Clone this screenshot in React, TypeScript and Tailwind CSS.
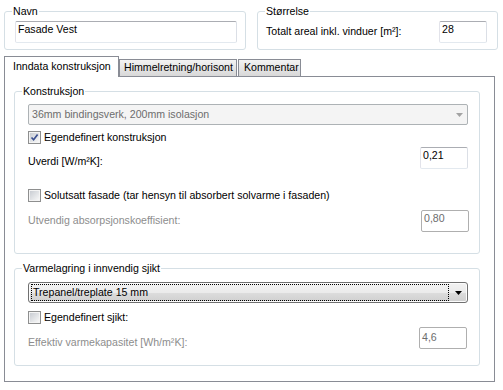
import type { ReactNode } from 'react';

function GroupBox({ title, className = '', children }: { title: string; className?: string; children: ReactNode }) {
  return (
    <fieldset className={`border border-[#d5dfe5] rounded-[3px] px-0 ${className}`}>
      <legend className="ml-[7px] px-[1px] leading-[12px]">{title}</legend>
      {children}
    </fieldset>
  );
}

function TextBox({ value, disabled = false, className = '' }: { value: string; disabled?: boolean; className?: string }) {
  const edge = disabled
    ? 'border-[#afafaf] text-[#6d6d6d]'
    : 'border-[#e3e9ef] border-t-[#abadb3] border-l-[#e2e3ea] border-r-[#dbdfe6] text-black';
  return (
    <div className={`h-[22px] shrink-0 border bg-white rounded-[2px] pl-[2px] pt-[1px] ${edge} ${className}`}>{value}</div>
  );
}

function CheckBox({ checked = false, label, className = '' }: { checked?: boolean; label: string; className?: string }) {
  return (
    <div className={`flex items-center ${className}`}>
      <span className="w-[13px] h-[13px] shrink-0 border border-[#8e8f8f] bg-[#f4f4f4] p-[1px]">
        <span className="block w-full h-full bg-linear-to-br from-[#c9cdd3] to-[#f7f7f7]">
          {checked && (
            <svg width="9" height="9" viewBox="0 0 9 9" className="block">
              <path d="M1.5 4.5 L3.6 6.8 L7.6 1.6" fill="none" stroke="#3a4f8f" strokeWidth="1.7" />
            </svg>
          )}
        </span>
      </span>
      <span className="ml-[3px]">{label}</span>
    </div>
  );
}

function DisabledCombo({ value }: { value: string }) {
  return (
    <div className="h-[21px] flex items-center justify-between border border-[#adb2b5] rounded-[2px] bg-[#f4f4f4] text-[#6d6d6d] pl-[3px] pr-[4px]">
      <span>{value}</span>
      <svg width="7" height="4" viewBox="0 0 7 4">
        <path d="M0 0 H7 L3.5 4 Z" fill="#a3a3a3" />
      </svg>
    </div>
  );
}

function FocusedCombo({ value }: { value: string }) {
  return (
    <div className="h-[21px] flex items-center border border-[#707070] rounded-[3px] bg-[linear-gradient(#f2f2f2_0%,#ebebeb_50%,#dddddd_50%,#cfcfcf_100%)] shadow-[inset_0_0_0_1px_#fcfcfc]">
      <div className="ml-[2px] w-[418px] h-[17px] border border-dotted border-black pl-[1px] pt-[1px]">{value}</div>
      <div className="flex-1 flex justify-center">
        <svg width="7" height="4" viewBox="0 0 7 4">
          <path d="M0 0 H7 L3.5 4 Z" fill="#000" />
        </svg>
      </div>
    </div>
  );
}

export default function App() {
  return (
    <div className="w-[503px] h-[390px] bg-white text-[10.6px] leading-[13px] text-black font-['Liberation_Sans',Arial,sans-serif] overflow-hidden">
      {/* Top row: Navn + Størrelse */}
      <div className="flex pt-[5px]">
        <GroupBox title="Navn" className="ml-[4px] w-[242px]">
          <div className="pt-[4px] pb-[6px] pl-[10px]">
            <TextBox value="Fasade Vest" className="w-[222px]" />
          </div>
        </GroupBox>
        <GroupBox title="Størrelse" className="ml-[11px] w-[241px]">
          <div className="flex items-start justify-between pt-[4px] pb-[6px] pl-[8px] pr-[10px]">
            <span className="mt-[4px]">Totalt areal inkl. vinduer [m²]:</span>
            <TextBox value="28" className="w-[48px]" />
          </div>
        </GroupBox>
      </div>

      {/* Tabs */}
      <div className="flex items-end h-[20px] mt-[6px] pl-[4px] relative z-10">
        <div className="h-[21px] -mb-px w-[115px] border border-b-0 border-[#898c95] bg-white pl-[8px] pt-[3px]">
          Inndata konstruksjon
        </div>
        <div className="h-[17px] w-[118px] border border-b-0 border-[#898c95] bg-linear-to-b from-[#f3f3f3] to-[#d8d8d8] pl-[4px] pt-[1px]">
          Himmelretning/horisont
        </div>
        <div className="h-[17px] w-[63px] ml-px border border-b-0 border-[#898c95] bg-linear-to-b from-[#f3f3f3] to-[#d8d8d8] pl-[5px] pt-[1px]">
          Kommentar
        </div>
      </div>

      {/* Tab page */}
      <div className="ml-[4px] w-[491px] h-[306px] border border-[#898c95] bg-white pt-[8px]">
        <GroupBox title="Konstruksjon" className="ml-[9px] w-[466px]">
          <div className="flex flex-col pt-[7px] pb-[21px] pl-[13px] pr-[11px]">
            <DisabledCombo value="36mm bindingsverk, 200mm isolasjon" />
            <CheckBox checked label="Egendefinert konstruksjon" className="mt-[6px]" />
            <div className="flex items-start justify-between mt-[3px]">
              <span className="mt-[8px]">Uverdi [W/m²K]:</span>
              <TextBox value="0,21" className="w-[48px]" />
            </div>
            <CheckBox label="Solutsatt fasade (tar hensyn til absorbert solvarme i fasaden)" className="mt-[20px]" />
            <div className="flex items-start justify-between mt-[8px]">
              <span className="mt-[4px] text-[#8d8d8d]">Utvendig absorpsjonskoeffisient:</span>
              <TextBox value="0,80" disabled className="w-[48px] mr-[-1px]" />
            </div>
          </div>
        </GroupBox>

        <GroupBox title="Varmelagring i innvendig sjikt" className="ml-[9px] w-[466px] mt-[8px]">
          <div className="flex flex-col pt-[8px] pb-[16px] pl-[13px] pr-[11px]">
            <FocusedCombo value="Trepanel/treplate 15 mm" />
            <CheckBox label="Egendefinert sjikt:" className="mt-[8px]" />
            <div className="flex items-start justify-between mt-[3px]">
              <span className="mt-[9px] text-[#8d8d8d]">Effektiv varmekapasitet [Wh/m²K]:</span>
              <TextBox value="4,6" disabled className="w-[48px] mr-[1px] pt-[3px]" />
            </div>
          </div>
        </GroupBox>
      </div>
    </div>
  );
}
